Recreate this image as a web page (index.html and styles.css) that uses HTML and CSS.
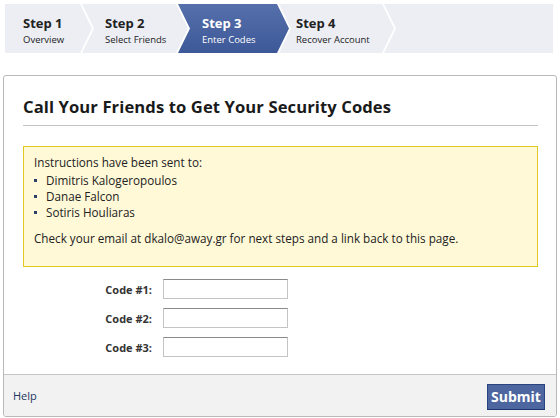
FILE: index.html
```html
<!DOCTYPE html>
<html>
<head>
<meta charset="utf-8">
<link rel="stylesheet" href="styles.css">
</head>
<body>
<div class="steps">
  <div class="step step-1"><div class="step-title">Step 1</div><div class="step-sub">Overview</div></div>
  <div class="step step-2"><div class="step-title">Step 2</div><div class="step-sub">Select Friends</div></div>
  <div class="step step-3 active"><div class="step-title">Step 3</div><div class="step-sub">Enter Codes</div></div>
  <div class="step step-4"><div class="step-title">Step 4</div><div class="step-sub">Recover Account</div></div>
  <div class="step step-end"></div>
</div>

<div class="card">
  <div class="card-body">
    <h1 class="title">Call Your Friends to Get Your Security Codes</h1>
    <div class="notice">
      <p class="notice-lead">Instructions have been sent to:</p>
      <ul class="names">
        <li>Dimitris Kalogeropoulos</li>
        <li>Danae Falcon</li>
        <li>Sotiris Houliaras</li>
      </ul>
      <p class="notice-end">Check your email at dkalo@away.gr for next steps and a link back to this page.</p>
    </div>
    <div class="codes">
      <label class="code-row"><span class="code-label">Code #1:</span><input class="code-input" type="text"></label>
      <label class="code-row"><span class="code-label">Code #2:</span><input class="code-input" type="text"></label>
      <label class="code-row"><span class="code-label">Code #3:</span><input class="code-input" type="text"></label>
    </div>
  </div>
  <div class="card-foot">
    <a class="help" href="#">Help</a>
    <button class="submit" type="button">Submit</button>
  </div>
</div>
</body>
</html>
```

FILE: styles.css
```css
* { box-sizing: border-box; }
html, body { margin: 0; padding: 0; background: #fff; }
body {
  font-family: "Open Sans", "DejaVu Sans", sans-serif;
  font-size: 11px;
  color: #222;
  padding-top: 4px;
}

.steps {
  display: flex;
  height: 49px;
  padding-left: 5px;
  width: 553px;
}
.step {
  height: 49px;
  background: #eceef4;
  margin-left: -10px;
  padding-top: 11px;
  color: #222;
  clip-path: polygon(0 0, calc(100% - 12px) 0, 100% 50%, calc(100% - 12px) 100%, 0 100%, 12px 50%);
}
.step-1 { margin-left: 0; width: 87px; padding-left: 18px;
  clip-path: polygon(0 0, calc(100% - 12px) 0, 100% 50%, calc(100% - 12px) 100%, 0 100%); }
.step-2 { width: 106px; padding-left: 23px; }
.step-3 { width: 111px; padding-left: 24px; }
.step-4 { width: 115px; padding-left: 17px; }
.step-end { flex: 1; clip-path: polygon(0 0, 100% 0, 100% 100%, 0 100%, 12px 50%); }
.step.active {
  background: linear-gradient(#5670ab, #3d5898);
  color: #fff;
}
.step-title { font-weight: bold; font-size: 13px; line-height: 17px; }
.step-sub { font-size: 9.5px; line-height: 14px; margin-top: 1px; }

.card {
  margin: 22px 0 0 3px;
  width: 554px;
  border: 1px solid #b9b9b9;
  border-radius: 3px;
  overflow: hidden;
}
.card-body { padding: 0 18px 17px 19px; }
.title {
  margin: 0;
  padding: 21px 0 8px;
  font-size: 16.6px;
  line-height: 20px;
  letter-spacing: 0.1px;
  font-weight: bold;
  color: #1a1a1a;
  border-bottom: 1px solid #c4c4c4;
}
.notice {
  margin-top: 20px;
  background: #fff9d7;
  border: 1px solid #e2c822;
  padding: 7px 10px 20px;
  font-size: 11.7px;
  line-height: 16px;
  color: #222;
}
.notice p { margin: 0; }
.names { list-style: none; margin: 2px 0 10px; padding: 0; }
.names li { position: relative; padding-left: 12px; }
.names li::before {
  content: "";
  position: absolute;
  left: 0; top: 7px;
  width: 3px; height: 3px;
  background: #2f3d6b;
}
.codes {
  margin-top: 12px;
  display: flex;
  flex-direction: column;
  gap: 9px;
}
.code-row { display: flex; align-items: center; }
.code-label {
  width: 140px;
  text-align: right;
  font-weight: bold;
  color: #333;
  padding-right: 11px;
}
.code-input {
  width: 125px;
  height: 20px;
  margin: 0;
  border: 1px solid #c4c4c4;
  border-top-color: #8a8a8a;
  background: #fff;
  font: inherit;
}
.card-foot {
  display: flex;
  justify-content: space-between;
  align-items: center;
  background: #f2f2f2;
  border-top: 1px solid #c6c6c6;
  height: 42px;
  padding: 0 11px 0 9px;
}
.help { color: #23355f; text-decoration: none; font-size: 11px; }
.submit {
  height: 26px;
  width: 58px;
  background: #4d66a0;
  border: 1px solid #29447e;
  border-bottom-color: #1a356e;
  color: #fff;
  font-family: inherit;
  font-weight: bold;
  font-size: 14px;
  padding: 0;
  margin-top: 2px;
}
```
